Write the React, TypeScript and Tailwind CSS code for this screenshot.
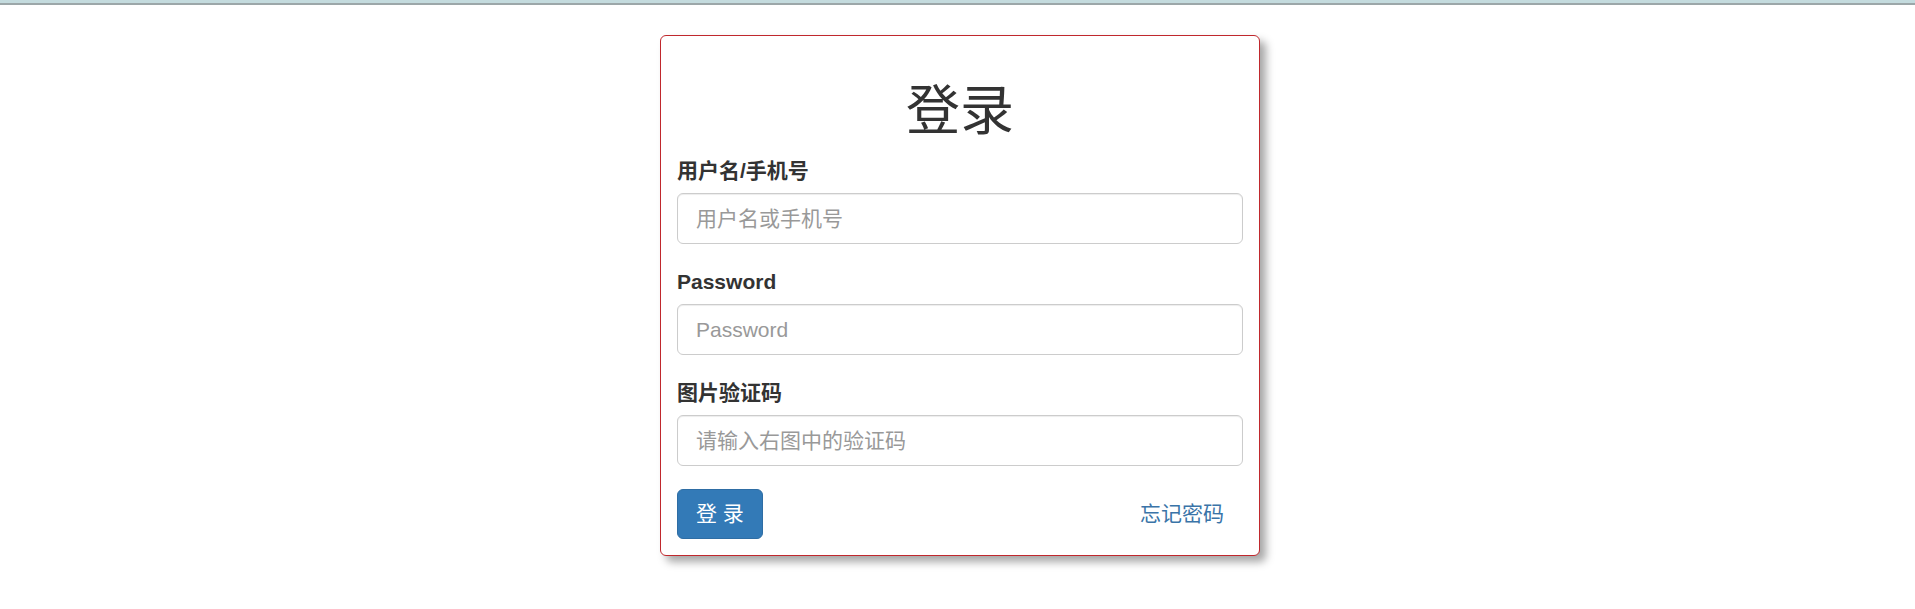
import React, { useState } from 'react';

const font = "font-['Liberation_Sans','Noto_Sans_CJK_SC',sans-serif]";

interface FieldProps {
  label: string;
  type?: string;
  placeholder: string;
  value: string;
  onChange: (v: string) => void;
}

const Field: React.FC<FieldProps> = ({ label, type = 'text', placeholder, value, onChange }) => (
  <div className="mb-[23px]">
    <label className="block text-[21px] leading-[30px] font-bold text-[#333] mb-[7px]">{label}</label>
    <input
      type={type}
      value={value}
      onChange={(e) => onChange(e.target.value)}
      placeholder={placeholder}
      className="block w-full h-[51px] px-[18px] text-[21px] text-[#555] bg-white border border-[#ccc] rounded-[6px] shadow-[inset_0_1px_1px_rgba(0,0,0,0.075)] placeholder:text-[#999] outline-none focus:border-[#66afe9]"
    />
  </div>
);

export default function App() {
  const [user, setUser] = useState('');
  const [password, setPassword] = useState('');
  const [code, setCode] = useState('');

  return (
    <div className={`min-h-screen bg-white ${font}`}>
      <div className="h-[3px] bg-[#c4dbde]" />
      <div className="h-[2px] bg-[#9ca7a9]" />

      <div className="flex justify-center pl-[5px] pt-[30px]">
        <form
          onSubmit={(e) => e.preventDefault()}
          className="w-[600px] bg-white border border-[#c0282d] rounded-[6px] p-[16px] shadow-[6px_6px_8px_rgba(0,0,0,0.35)]"
        >
          <h1 className="text-center text-[54px] leading-[59px] font-normal text-[#333] mt-[30px] mb-[15px]">登录</h1>

          <Field label="用户名/手机号" placeholder="用户名或手机号" value={user} onChange={setUser} />
          <Field label="Password" type="password" placeholder="Password" value={password} onChange={setPassword} />
          <Field label="图片验证码" placeholder="请输入右图中的验证码" value={code} onChange={setCode} />

          <div className="flex items-center justify-between">
            <button
              type="submit"
              className="h-[50px] px-[18px] text-[21px] text-white bg-[#337ab7] border border-[#2e6da4] rounded-[6px] hover:bg-[#286090]"
            >
              登 录
            </button>
            <a href="#" className="px-[19px] text-[21px] text-[#3a74a8] hover:underline">
              忘记密码
            </a>
          </div>
        </form>
      </div>
    </div>
  );
}
